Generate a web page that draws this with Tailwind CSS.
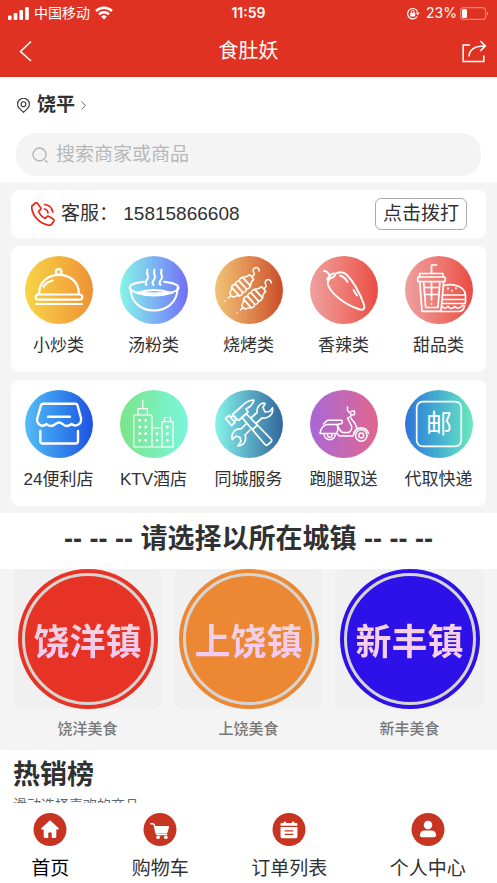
<!DOCTYPE html>
<html lang="zh-CN">
<head>
    <meta charset="UTF-8">
    <meta name="viewport" content="width=device-width, initial-scale=1.0">
    <title>食肚妖</title>
    <script src="https://cdn.jsdelivr.net/npm/@tailwindcss/browser@4"></script>
</head>
<body class="flex h-screen flex-col bg-white font-['Liberation_Sans','Noto_Sans_CJK_SC',sans-serif] text-[#303133]">
    <!-- Header -->
    <header class="shrink-0 bg-[#e03222] text-white">
        <!-- Status bar -->
        <div class="grid h-[26px] grid-cols-3 items-center px-2 text-sm leading-5">
            <div class="flex items-center gap-[5px]">
                <svg class="h-[13px] w-[21px]" viewBox="0 0 21 13" fill="currentColor">
                    <rect x="0" y="8.5" width="3.6" height="4.5" rx="1"/>
                    <rect x="5.7" y="6" width="3.6" height="7" rx="1"/>
                    <rect x="11.4" y="3" width="3.6" height="10" rx="1"/>
                    <rect x="17.2" y="0" width="3.6" height="13" rx="1"/>
                </svg>
                <span>中国移动</span>
                <svg class="h-[14px] w-[18px]" viewBox="0 0 18 14">
                    <g fill="none" stroke="currentColor" stroke-width="2.5">
                        <path d="M1 5a11.500 11.500 0 0 1 16 0"/>
                        <path d="M4 8.300a7.200 7.200 0 0 1 10 0"/>
                    </g>
                    <path d="M9 13.500 6.200 10.700a4 4 0 0 1 5.600 0z" fill="currentColor"/>
                </svg>
            </div>
            <div class="text-center font-['Inter'] font-semibold">11:59</div>
            <div class="flex items-center justify-end">
                <svg class="mr-[6px] h-[13px] w-[14px]" viewBox="0 0 14 13">
                    <path d="M11.200 9.500a5.200 5.200 0 1 1 .4-4.800" fill="none" stroke="currentColor" stroke-width="1.200"/>
                    <path d="M9.700 5.500h4l-2 3z" fill="currentColor"/>
                    <rect x="4.200" y="5.800" width="5" height="3.800" rx=".6" fill="currentColor"/>
                    <path d="M5.300 6V4.800a1.400 1.400 0 0 1 2.800 0V6" fill="none" stroke="currentColor"/>
                </svg>
                <span class="font-['Inter']">23%</span>
                <svg class="ml-[3px] h-[13px] w-[29px]" viewBox="0 0 29 13">
                    <rect x=".6" y=".6" width="25" height="11.800" rx="3" fill="none" stroke="#fff" stroke-opacity=".4" stroke-width="1.200"/>
                    <rect x="2" y="2" width="5" height="9" rx="1.500" fill="#fff"/>
                    <path d="M27 4.500a2.200 2.200 0 0 1 0 4z" fill="#fff" fill-opacity=".5"/>
                </svg>
            </div>
        </div>
        <!-- Title bar -->
        <div class="flex h-[51px] items-start justify-between px-[10px]">
            <button type="button" aria-label="返回" class="mt-[14px] w-8 pl-2">
                <svg class="h-[22px] w-[14px]" viewBox="0 0 14 22" fill="none" stroke="currentColor" stroke-width="1.600">
                    <path d="M13 1.500 2.500 11.500 13 21"/>
                </svg>
            </button>
            <h1 class="mt-[11px] text-xl leading-7">食肚妖</h1>
            <button type="button" aria-label="分享" class="mt-[14px] flex w-8 justify-end">
                <svg class="h-[23px] w-[26px]" viewBox="0 0 26 23" fill="none" stroke="currentColor" stroke-width="1.600">
                    <path d="M9 5H2.200v16.500h20.600V15.500"/>
                    <path d="M8 16.500C8.300 9.500 13 6 24 6M19.300 1l5 5-5 5"/>
                </svg>
            </button>
        </div>
    </header>

    <!-- Main Content -->
    <main class="min-h-0 flex-1 overflow-y-auto [scrollbar-width:none]">
        <!-- Location and search -->
        <section class="px-4 pt-[14px] pb-[6px]">
            <button type="button" class="flex h-7 items-center text-[19px] leading-7 font-bold">
                <svg class="mr-[7px] ml-px h-[15px] w-[13px]" viewBox="0 0 13 15" fill="none" stroke="currentColor" stroke-width="1.100">
                    <path d="M6.500 14.300 2.400 10.400a5.900 5.900 0 1 1 8.200 0z"/>
                    <circle cx="6.500" cy="6.200" r="2.400"/>
                </svg>
                饶平
                <svg class="ml-[6px] h-[9px] w-[5px]" viewBox="0 0 5 9" fill="none" stroke="#666">
                    <path d="M.5.500 4.300 4.500.5 8.500"/>
                </svg>
            </button>
            <div class="mt-[14px] flex h-[43px] items-center rounded-[20px] bg-[#f4f4f4] px-4">
                <svg class="mr-2 h-4 w-4 shrink-0" viewBox="0 0 16 16" fill="none" stroke="#b5b5b5" stroke-width="1.400">
                    <circle cx="7.500" cy="7.500" r="6.500"/>
                    <path d="m13 13 2.500 2.500"/>
                </svg>
                <input type="text" aria-label="搜索" placeholder="搜索商家或商品" class="min-w-0 flex-1 bg-transparent text-[19px] leading-7 outline-none placeholder:text-[#b8b8b8]">
            </div>
        </section>

        <!-- Service phone and categories -->
        <section class="space-y-2 bg-[#f4f4f4] px-[11px] pt-2 pb-[7px]">
            <div class="flex h-12 items-center rounded-lg bg-white pr-[19px] pl-5 text-[19px] leading-7">
                <svg class="mr-[6px] h-6 w-6" viewBox="0 0 24 24" fill="none" stroke="#e5281c" stroke-width="1.700" stroke-linejoin="round" stroke-linecap="round">
                    <path d="M1 4 4.500.8q1-.5 1.700.3l3.500 4.700q.5 1-.2 1.700L7.500 9.300q1.800 4.700 6.700 7.200l1.800-2q.8-.7 1.700-.2l4.700 3q1 .8.5 1.700l-2.400 3.500q-1.200 1-3 .7C8.500 21.500 2 14.500.8 6.500Q.6 5 1 4z"/>
                    <path d="M13.500 7q3 .6 3.500 4M13.500 2.500q7 .8 8.300 7.500"/>
                </svg>
                <p class="whitespace-pre">客服： 15815866608</p>
                <button type="button" class="ml-auto h-8 rounded-md border border-[#aaa] px-[7px] leading-7">点击拨打</button>
            </div>

            <nav class="grid grid-cols-5 rounded-lg bg-white pt-[10px] pb-[13px] text-center text-[17px] leading-[26px]">
                <a href="#" class="flex flex-col items-center gap-[9px]">
                    <span class="size-[68px] rounded-full bg-linear-to-r from-[#f7d547] to-[#ee9135]">
                        <svg viewBox="0 0 68 68" fill="none" stroke="#fff" stroke-width="2.200" stroke-linecap="round">
                            <circle cx="33.700" cy="16" r="2.800"/>
                            <path d="M14 38C14 12.500 54 12.500 54 38M18.700 30.500Q21 26.500 27.500 24.500"/>
                            <rect x="10.700" y="38.500" width="46.600" height="5.200" rx="2.600"/>
                            <path d="M11 48h46"/>
                        </svg>
                    </span>
                    小炒类
                </a>
                <a href="#" class="flex flex-col items-center gap-[9px]">
                    <span class="size-[68px] rounded-full bg-linear-to-r from-[#86f5e6] to-[#736cf7]">
                        <svg viewBox="0 0 68 68" fill="none" stroke="#fff" stroke-width="2" stroke-linecap="round">
                            <path d="M26.500 29c-3.500-4 2.500-5 1.500-8.500-1-3-1.500-3.500-.5-7M33.500 29c-3.500-4 2.500-5 1.500-8.500-1-3-1.500-3.500-.5-7M40.500 29c-3.500-4 2.500-5 1.500-8.500-1-3-1.500-3.500-.5-7"/>
                            <path d="M24 25.700C5 27.500 5 36 22 37q12 1 24 0c17-1 17-9.500-2-11.300"/>
                            <path d="M10.500 32c0 30 47 30 47 0"/>
                            <path d="M17 37q17-6 34 0-17 5-34 0z"/>
                        </svg>
                    </span>
                    汤粉类
                </a>
                <a href="#" class="flex flex-col items-center gap-[9px]">
                    <span class="size-[68px] rounded-full bg-linear-to-r from-[#f1c477] to-[#c94c28]">
                        <svg viewBox="0 0 68 68" fill="none" stroke="#fff" stroke-width="1.500" stroke-linecap="round" stroke-linejoin="round">
                            <g transform="translate(10 45) rotate(-42)">
                                <path d="M0 0h.1M4.500 0H8M8 0l1-3q3 0 5-3v12q-2-3-5-3zM36 0h2q2 0 2.500-2a3 3 0 1 1 5 2.500"/>
                                <rect x="14" y="-6.500" width="5" height="13" rx="2.500"/>
                                <rect x="19" y="-6.500" width="5" height="13" rx="2.500"/>
                                <rect x="24" y="-6.500" width="5" height="13" rx="2.500"/>
                                <path d="M29-6q3 3 7 3v6q-4 0-7 3z"/>
                            </g>
                            <g transform="translate(22 57) rotate(-42)">
                                <path d="M0 0h.1M4.500 0H8M8 0l1-3q3 0 5-3v12q-2-3-5-3zM36 0h2q2 0 2.500-2a3 3 0 1 1 5 2.500"/>
                                <rect x="14" y="-6.500" width="5" height="13" rx="2.500"/>
                                <rect x="19" y="-6.500" width="5" height="13" rx="2.500"/>
                                <rect x="24" y="-6.500" width="5" height="13" rx="2.500"/>
                                <path d="M29-6q3 3 7 3v6q-4 0-7 3z"/>
                            </g>
                        </svg>
                    </span>
                    烧烤类
                </a>
                <a href="#" class="flex flex-col items-center gap-[9px]">
                    <span class="size-[68px] rounded-full bg-linear-to-r from-[#eea09f] to-[#e94a42]">
                        <svg viewBox="0 0 68 68" fill="none" stroke="#fff" stroke-width="1.900" stroke-linecap="round" stroke-linejoin="round">
                            <path d="M14 15q4 0 5.500 5M19.500 20.500q2.500-4 6-2.500-1 3.500-5 4l-2.500 2.500q-2-2 1.500-4z"/>
                            <path d="M26 17.500q6-3 10.500 1C44 26 50 38 54 48.500c1.500 5-1.500 6-5.500 4.500C36 49 22 39 18 29q-1-3 1-6"/>
                            <path d="M30 19.500q5 1.500 7.500 6.500M43.500 34l3.500 5.500"/>
                        </svg>
                    </span>
                    香辣类
                </a>
                <a href="#" class="flex flex-col items-center gap-[9px]">
                    <span class="size-[68px] rounded-full bg-linear-to-r from-[#eea09f] to-[#e94a42]">
                        <svg viewBox="0 0 68 68" fill="none" stroke="#fff" stroke-width="1.700" stroke-linecap="round" stroke-linejoin="round">
                            <path d="M26.500 17V9H31.500M14.700 21v-3.500H38V21"/>
                            <rect x="12.700" y="21" width="27.500" height="4.700" rx="1"/>
                            <path d="M14.700 25.700 17 55.300h19l2.700-29.600M18.700 27l2 24.500H33L34.800 27M19.700 38.500h14M26.500 27v17M26.500 47.500v.5M20 31.500h14"/>
                            <path d="M39.500 29.500C49 27 60 31 60.500 39H38M38 43.500h22.500V39M38 47.500h22q1-2 .5-4M37 50.500q3 3 6 0 3.500 4 6.500 0 4 3.500 8-1h2q-1 6-6 6H36M43 32v1M47 34.500v.5M51 32v.5"/>
                        </svg>
                    </span>
                    甜品类
                </a>
            </nav>

            <nav class="grid grid-cols-5 rounded-lg bg-white pt-[10px] pb-[13px] text-center text-[17px] leading-[26px]">
                <a href="#" class="flex flex-col items-center gap-[9px]">
                    <span class="size-[68px] rounded-full bg-linear-to-r from-[#55bdf6] to-[#2350e2]">
                        <svg viewBox="0 0 68 68" fill="none" stroke="#fff" stroke-width="2.400" stroke-linecap="round" stroke-linejoin="round">
                            <path d="M18 13.700h32.500q1.500 0 2 1.500L56 28c1 7-6 9-9.500 6q-5 4-9 0-3.500-3-7 0-5 4-9 0C17 38 11 34 12.300 28L16 15.200q.5-1.500 2-1.500zM23 26.700h22"/>
                            <path d="M15.300 41v10q0 2.500 2.500 2.500H50.500q2.500 0 2.500-2.500V41"/>
                        </svg>
                    </span>
                    24便利店
                </a>
                <a href="#" class="flex flex-col items-center gap-[9px]">
                    <span class="size-[68px] rounded-full bg-linear-to-r from-[#7be587] to-[#7bf5dc]">
                        <svg viewBox="0 0 68 68" fill="none" stroke="#fff" stroke-width="1.200">
                            <path d="M22.700 9.700v9M18 25v-6.300h9.300V25M32 38h10M44.500 31.700V27.500h6v4.200M32 57h10"/>
                            <rect x="13.700" y="25" width="18.300" height="32" rx="1"/>
                            <rect x="42" y="31.700" width="11" height="25.300"/>
                            <path d="M19.700 30.300h.1M25.700 30.300h.1M19.700 37h.1M25.700 37h.1M19.700 43.700h.1M25.700 43.700h.1M19.700 50.300h.1M25.700 50.300h.1M37 43.700h.1M37 50.300h.1M47.300 37h.1M47.300 43.700h.1M47.300 50.300h.1" stroke-width="2.800" stroke-linecap="round"/>
                        </svg>
                    </span>
                    KTV酒店
                </a>
                <a href="#" class="flex flex-col items-center gap-[9px]">
                    <span class="size-[68px] rounded-full bg-linear-to-r from-[#87f5ea] to-[#34679c]">
                        <svg viewBox="0 0 68 68" fill="none" stroke="#fff" stroke-width="1.700" stroke-linecap="round" stroke-linejoin="round">
                            <path d="M10.500 28.500 14 25.500l6 7-3.500 3zM16 27l2-1.500 3.500 4-2 1.500M17.500 24.500l9-8q5-6 12.500-6.500-1.500 6-8 9l2 3-9.500 8.500z"/>
                            <path d="M27 27.500 50 54.500q1.500 1.500 3 0l3-2.500q1.500-1.500 0-3L31.500 24M37.500 39.500l5-4.500"/>
                            <path d="m36.500 27.500 5.500-5q-.5-7 6-9.500l2 .5-2 4 2 4.500 4.500-.5 3-3.500q1 7-5.500 9.500-3 1-5 .5L41 33.500"/>
                            <path d="m31 34-5 5q-6-.5-8 4-2 4-.5 6.500l3.500-3.500 4 1.500 1 4-3 4.500q7-1 7.500-6.500.5-3-.5-4.500l5-5"/>
                        </svg>
                    </span>
                    同城服务
                </a>
                <a href="#" class="flex flex-col items-center gap-[9px]">
                    <span class="size-[68px] rounded-full bg-linear-to-r from-[#a966d6] to-[#e0648d]">
                        <svg viewBox="0 0 68 68" fill="none" stroke="#fff" stroke-width="1.500" stroke-linecap="round" stroke-linejoin="round">
                            <circle cx="51.300" cy="45.500" r="5.700"/>
                            <circle cx="51.300" cy="45.500" r="2.400"/>
                            <path d="M14 44a5.700 5.700 0 1 0 11.400 0M17.500 44.500a2.300 2.300 0 1 0 4.500 0"/>
                            <path d="M10 43.500q1-7.500 7-9h10q1.500 3.500 0 9zM13.500 34l4-3.700H32v3.200l-5 1M27.500 35q2 6 5 7.500h6q4-2 3-6.500l-4-8M26.500 43.500l3 2.500H43l2.500-6M41 28.500q5 5 6 10.500M43.500 44q2.500-7 9-6 5 1 6 5.500"/>
                            <path d="m38 28 4.500-3 2-.5V21l-3.500.5M37.500 17v3.500l3.500 3.500v3"/>
                        </svg>
                    </span>
                    跑腿取送
                </a>
                <a href="#" class="flex flex-col items-center gap-[9px]">
                    <span class="size-[68px] rounded-full bg-linear-to-r from-[#3174d8] to-[#6ae9bd]">
                        <svg viewBox="0 0 68 68" fill="none">
                            <rect x="11.700" y="11.700" width="44.600" height="44.600" rx="6" stroke="#fff" stroke-width="1.700"/>
                            <text x="34" y="43" text-anchor="middle" font-size="26" fill="#fff">邮</text>
                        </svg>
                    </span>
                    代取快递
                </a>
            </nav>
        </section>

        <!-- Town picker -->
        <h2 class="pt-[6px] pb-[10px] text-center text-[27px] leading-10 font-bold whitespace-nowrap">-- -- -- 请选择以所在城镇 -- -- --</h2>
        <section class="grid grid-cols-3 gap-3 bg-[#f4f4f4] px-[13px] pb-[9px] text-center text-[15px] leading-6 font-medium text-[#777]">
            <a href="#">
                <span class="flex h-[140px] items-center justify-center rounded-lg bg-[#f0f0f0]">
                    <span class="flex size-[140px] rounded-full bg-[#e73325] p-1">
                        <span class="flex flex-1 items-center justify-center rounded-full border-3 border-[#d7d5d1] pt-2">
                            <span class="bg-linear-to-t from-[#f0c8fb] to-[#f5d3dc] bg-clip-text text-4xl font-bold whitespace-nowrap text-transparent">饶洋镇</span>
                        </span>
                    </span>
                </span>
                <span class="mt-2 block">饶洋美食</span>
            </a>
            <a href="#">
                <span class="flex h-[140px] items-center justify-center rounded-lg bg-[#f0f0f0]">
                    <span class="flex size-[140px] rounded-full bg-[#ec8733] p-1">
                        <span class="flex flex-1 items-center justify-center rounded-full border-3 border-[#d7d5d1] pt-2">
                            <span class="bg-linear-to-t from-[#f0c8fb] to-[#f5d3dc] bg-clip-text text-4xl font-bold whitespace-nowrap text-transparent">上饶镇</span>
                        </span>
                    </span>
                </span>
                <span class="mt-2 block">上饶美食</span>
            </a>
            <a href="#">
                <span class="flex h-[140px] items-center justify-center rounded-lg bg-[#f0f0f0]">
                    <span class="flex size-[140px] rounded-full bg-[#2e10e8] p-1">
                        <span class="flex flex-1 items-center justify-center rounded-full border-3 border-[#d7d5d1] pt-2">
                            <span class="bg-linear-to-t from-[#f5cdf3] to-[#f5d3dc] bg-clip-text text-4xl font-bold whitespace-nowrap text-transparent">新丰镇</span>
                        </span>
                    </span>
                </span>
                <span class="mt-2 block">新丰美食</span>
            </a>
        </section>

        <!-- Best sellers -->
        <section class="px-[13px] pt-[5px]">
            <h2 class="text-[27px] leading-10 font-bold">热销榜</h2>
            <p class="text-sm leading-5 text-[#666]">滑动选择喜欢的商品</p>
        </section>
    </main>

    <!-- Tab bar -->
    <nav class="flex h-20 shrink-0 justify-around bg-white pt-[10px] text-[19px] leading-7">
        <a href="#" class="flex flex-col items-center gap-[9px] text-black">
            <svg class="size-[34px]" viewBox="0 0 34 34">
                <circle cx="17" cy="17" r="17" fill="#c73522"/>
                <path d="M17 7.500 8 15.800q-.5.900.5 1.100h2V24.500q0 1.200 1.200 1.200h3.500V20.500q1.800-1.500 3.600 0v5.200h3.500q1.200 0 1.200-1.200v-7.600h2q1-.2.500-1.100z" fill="#fff"/>
            </svg>
            首页
        </a>
        <a href="#" class="flex flex-col items-center gap-[9px]">
            <svg class="size-[34px]" viewBox="0 0 34 34">
                <circle cx="17" cy="17" r="17" fill="#c73522"/>
                <path d="M7.500 11h2q1.300 0 1.600 1.300L13 21q.4 1.200 1.600 1.200H24" fill="none" stroke="#fff" stroke-width="1.500" stroke-linecap="round"/>
                <path d="M11.500 13.500H25.500q1 0 .8 1l-1.400 5.300q-.3 1.200-1.500 1.200H14.300q-1 0-1.300-1z" fill="#fff"/>
                <circle cx="15" cy="25" r="1.900" fill="#fff"/>
                <circle cx="23" cy="25" r="1.900" fill="#fff"/>
            </svg>
            购物车
        </a>
        <a href="#" class="flex flex-col items-center gap-[9px]">
            <svg class="size-[34px]" viewBox="0 0 34 34">
                <circle cx="17" cy="17" r="17" fill="#c73522"/>
                <path d="M8.300 13.200v-2q0-1 1-1h2.200V9h2.500v1.200h6V9h2.500v1.200h2.200q1 0 1 1v2zM8.300 14.500h17.400v10q0 1.500-1.500 1.500H9.800q-1.500 0-1.500-1.500z" fill="#fff"/>
                <path d="M12.500 18.500h9M12.500 22h9" stroke="#c73522" stroke-width="1.200"/>
            </svg>
            订单列表
        </a>
        <a href="#" class="flex flex-col items-center gap-[9px]">
            <svg class="size-[34px]" viewBox="0 0 34 34">
                <circle cx="17" cy="17" r="17" fill="#c73522"/>
                <circle cx="17" cy="12.300" r="4.400" fill="#fff"/>
                <path d="M8.700 23q0-5 5-5h6.600q5 0 5 5 0 2-2 2H10.700q-2 0-2-2z" fill="#fff"/>
            </svg>
            个人中心
        </a>
    </nav>
</body>
</html>
